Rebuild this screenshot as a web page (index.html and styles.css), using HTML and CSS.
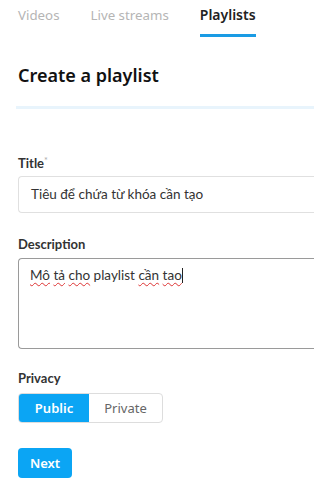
FILE: index.html
```html
<!DOCTYPE html>
<html>
<head>
    <title>Create a playlist</title>
    <link rel="stylesheet" href="styles.css">
</head>
<body>
    <div class="tabs">
        <span class="tab">Videos</span>
        <span class="tab">Live streams</span>
        <span class="tab active">Playlists</span>
    </div>

    <div class="page">
        <h1>Create a playlist</h1>
        <div class="divider"></div>

        <div class="form-group">
            <label class="field-label">Title<sup>*</sup></label>
            <div class="input">Tiêu để chứa từ khóa cần tạo</div>
        </div>

        <div class="form-group desc">
            <label class="field-label">Description</label>
            <div class="textarea"><span class="typo">Mô</span> <span class="typo">tả</span> <span class="typo">cho</span> playlist <span class="typo">cần</span> <span class="typo">tao</span><span class="caret"></span></div>
        </div>

        <div class="form-group privacy">
            <label class="field-label">Privacy</label>
            <div class="segmented">
                <span class="seg on">Public</span>
                <span class="seg">Private</span>
            </div>
        </div>

        <button class="next">Next</button>
    </div>
</body>
</html>
```

FILE: styles.css
```css
body { margin: 0; background: #fff; font-family: Lato, "Noto Sans", sans-serif; color: #222; overflow: hidden; }
.tabs { display: flex; gap: 31px; padding: 5px 0 0 18px; height: 32px; }
.tab { font-family: "Noto Sans", sans-serif; font-size: 13.3px; color: #b5b5b5; line-height: 20px; }
.tab.active { font-size: 14px; color: #222; font-weight: 600; border-bottom: 3px solid #1a9be4; height: 29px; }
.page { padding: 0 0 0 18px; }
h1 { font-family: "Noto Sans", sans-serif; font-size: 18px; font-weight: 600; color: #111; margin: 26px 0 0; line-height: 24px; }
.divider { height: 3px; background: #e8f4fc; margin: 19px 0 0 -2px; }
.form-group { margin-top: 44px; }
.form-group + .form-group { margin-top: 23px; }
.field-label { display: block; font-weight: bold; font-size: 13px; color: #333; line-height: 16px; margin-bottom: 5px; }
.field-label sup { font-size: 9px; color: #aaa; font-weight: normal; vertical-align: 4px; }
.input { height: 35px; border: 1px solid #e0e0e0; border-right: none; border-radius: 4px 0 0 4px; padding: 0 0 0 12px; font-size: 13.5px; line-height: 35px; color: #333; white-space: nowrap; }
.desc .field-label { margin-bottom: 6px; }
.textarea { height: 82px; border: 1px solid #9a9a9a; border-right: none; border-radius: 4px 0 0 4px; padding: 7px 0 0 11px; font-size: 13.5px; line-height: 18px; color: #333; }
.typo { text-decoration: underline wavy #d33; text-decoration-thickness: 1px; text-underline-offset: 2px; }
.caret { display: inline-block; width: 1px; height: 15px; background: #222; vertical-align: -3px; }
.form-group.privacy { margin-top: 21px; }
.privacy .field-label { margin-bottom: 7px; }
.segmented { display: inline-flex; border: 1px solid #ddd; border-radius: 4px; overflow: hidden; }
.seg { width: 73px; height: 28px; line-height: 28px; text-align: center; font-family: "Noto Sans", sans-serif; font-size: 13px; color: #666; }
.seg.on { width: 70px; background: #0ba5f4; color: #fff; font-weight: 600; }
.next { display: block; margin-top: 25px; width: 54px; height: 30px; border: none; border-radius: 4px; background: #0ba5f4; color: #fff; font-family: "Noto Sans", sans-serif; font-size: 13px; font-weight: 600; padding: 0; }
```
